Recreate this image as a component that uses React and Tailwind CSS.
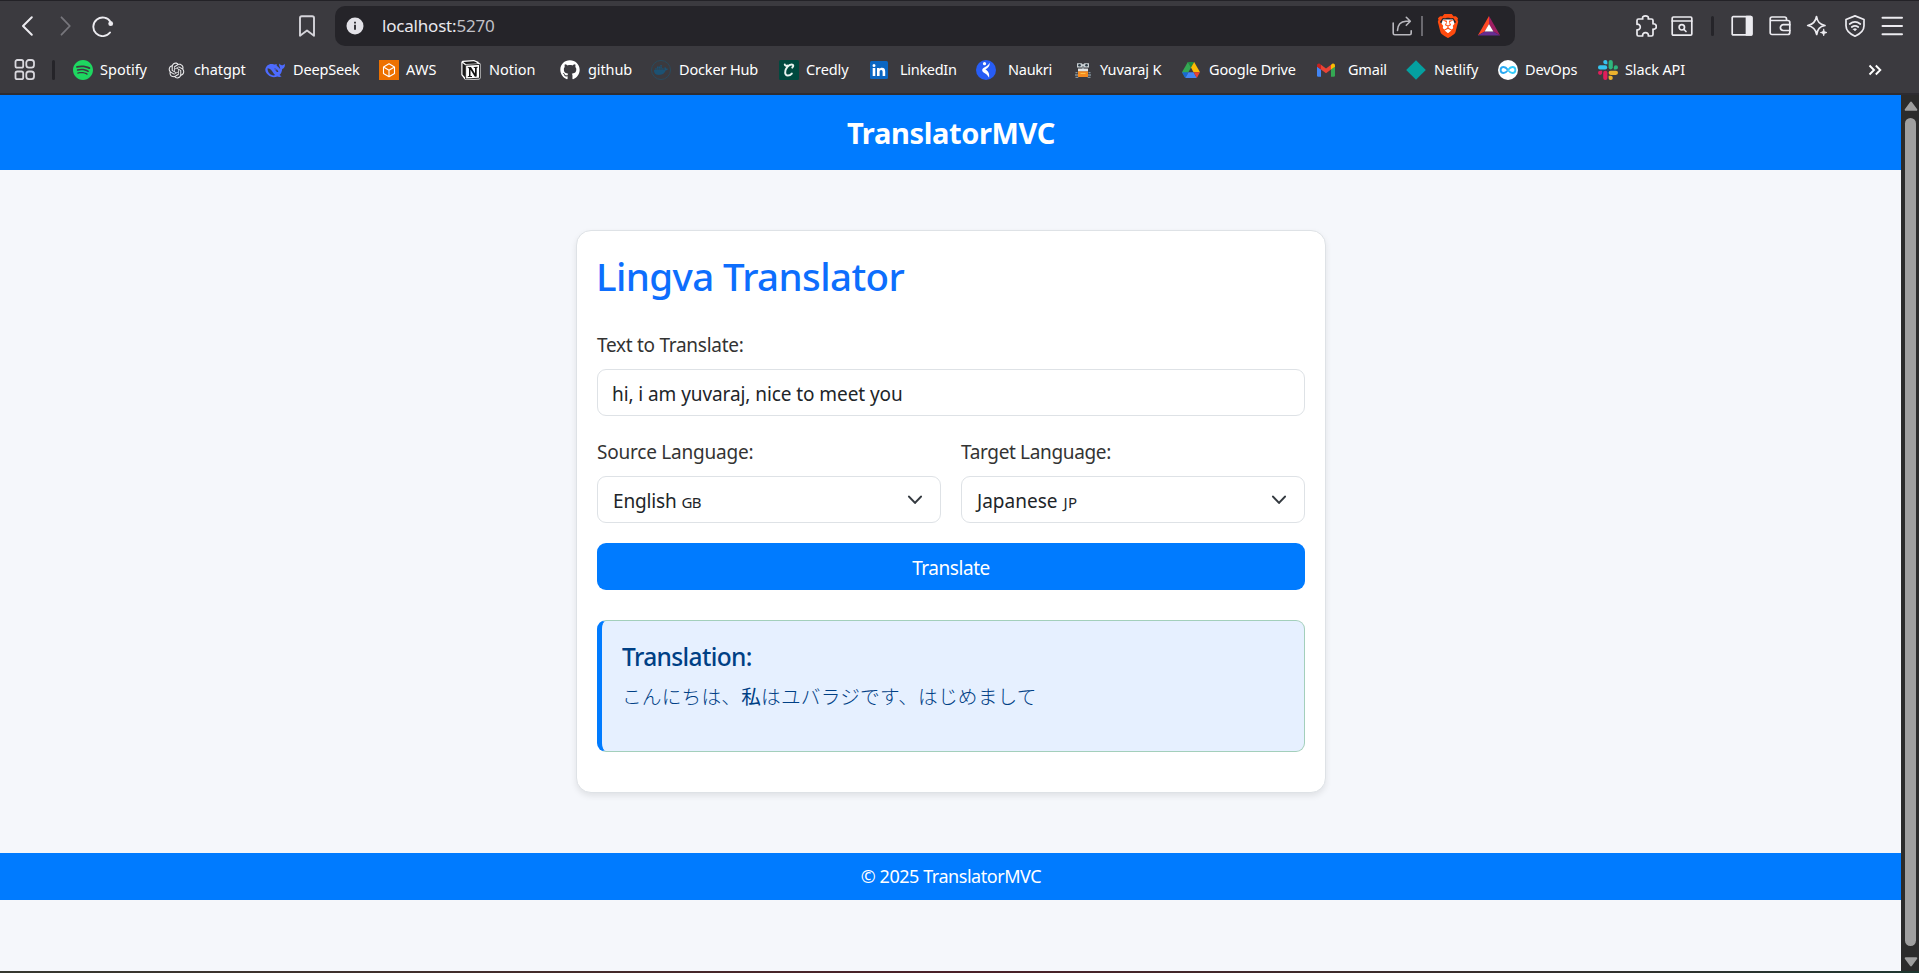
import { SiSpotify, SiBrave, SiDocker } from "react-icons/si";
import { RiOpenaiFill } from "react-icons/ri";
import { FaGithub } from "react-icons/fa";

function Stroke({ className, width = 1.7, children }) {
  return (
    <svg
      viewBox="0 0 22 22"
      className={`block h-[22px] w-[22px] shrink-0 ${className || ""}`}
      fill="none"
      stroke="currentColor"
      strokeWidth={width}
      strokeLinecap="round"
      strokeLinejoin="round"
    >
      {children}
    </svg>
  );
}

function Fill({ className, children }) {
  return (
    <svg viewBox="0 0 20 20" className={`block h-5 w-5 ${className || ""}`}>
      {children}
    </svg>
  );
}

const DeepSeekIcon = () => (
  <Fill>
    <path
      fill="#4d6bfe"
      d="M0.3 9.6C0.6 6.2 3.2 3.9 6.4 3.9c1.6 0 2.6.6 3.8.6.8 0 1-.5 1.6-.4-.5.9-.1 1.7.8 2.4 1 .8 1.9 1.6 2.5 2.6.2-1.100-.2-1.900-.7-2.900-.4-.9-.4-1.800.100-2.700.5 1 1.300 1.500 2.300 1.700 1.200.1 2.100-.5 3-1.500.5 2.700-.6 4.600-2.600 5.200-.2 2.600-1.200 4.600-2.700 6.100.8.600 1.500.9 2.100 1.300-1.400.900-3 .9-4.300.2-3 1.400-6.600.8-9-1.400C1.200 13.400.2 11.600.3 9.600Z"
    />
    <path
      fill="#3b3a3f"
      d="M2.600 8.200c2.800.1 4.400 2.300 5.600 4.600.5.9 1.100 1.600 2 2.100l-1.400.6C5.300 15.200 2.300 12.200 2.600 8.200ZM9.300 8.500c2.200 0 3.700 1.500 4.100 3.600-.8-.3-1.300-.2-2-.7C10.400 10.700 9.900 9.600 9.300 8.500Z"
    />
    <circle cx="10.900" cy="9.700" r="0.700" fill="#4d6bfe" />
  </Fill>
);

const AwsIcon = () => (
  <Fill>
    <path fill="#ed7100" d="M0 0h20v20H0z" />
    <path
      fill="none"
      stroke="#fff"
      strokeWidth="1.100"
      strokeLinejoin="round"
      d="M10 3.800 15.500 7v6.500L10 16.700 4.500 13.500V7ZM4.500 7 10 10.200 15.500 7M10 10.200v6.500"
    />
  </Fill>
);

const NotionIcon = () => (
  <Fill>
    <path fill="#fff" d="M1.500 0.700 13 0l3 1.200 3.500 2.600v14.400l-1.200 1.400L5 20 3.600 19.200.300 15V2Z" />
    <path fill="#1a1a1a" d="M2.200 1.900 12.800 1.200l2 .800 2 1.400-12 .7ZM1.500 3l2.500 2v12.300L1.500 14.400Z" />
    <path fill="none" stroke="#111" strokeWidth="0.900" d="M4.600 5.200 18.500 4.400v13.800L4.600 19Z" />
    <path fill="#111" d="M6.800 7.300 10 7.100l4 6.400V8l-1.300-.200v-.8l4-.2v.8l-1 .300v8.700l-1.800.100-4.400-7v6.200l1.500.200v.8l-4.200.2v-.8l1.200-.400V8.300L6.800 8.100Z" />
  </Fill>
);

const DockerIcon = () => (
  <span className="flex h-5 w-5 items-center justify-center rounded-full border border-[#294a5d]">
    <SiDocker className="h-[14px] w-[14px] text-[#1c5273]" />
  </span>
);

const CredlyIcon = () => (
  <Fill>
    <rect width="20" height="20" rx="1.500" fill="#00493f" />
    <path
      fill="none"
      stroke="#e8f4f0"
      strokeWidth="2"
      strokeLinecap="round"
      d="M13.300 7.600c1.500-1.400 1.200-3.200-.700-3.200-3 0-6.200 4-6.400 7.500-.2 2.300 1 3.700 2.700 3.700 1.600 0 2.900-.8 3.900-2M8.400 5.600C7 6 6 5.600 5.800 4.600"
    />
  </Fill>
);

const LinkedInIcon = () => (
  <Fill>
    <rect x="1" y="1" width="18" height="18" rx="1.500" fill="#0a66c2" />
    <path
      fill="#fff"
      d="M3.700 7.900h2.600V16H3.700ZM5 3.900a1.500 1.500 0 1 1 0 3 1.500 1.500 0 0 1 0-3ZM8 7.900h2.500V9c.5-.8 1.400-1.300 2.500-1.300 2.500 0 3.200 1.500 3.200 3.900V16h-2.600v-4c0-1.100-.2-2.100-1.400-2.100s-1.600.9-1.600 2V16H8Z"
    />
  </Fill>
);

const NaukriIcon = () => (
  <Fill>
    <circle cx="10" cy="10" r="10" fill="#275df5" />
    <circle cx="8.500" cy="3.700" r="1.600" fill="#fff" />
    <path fill="#fff" d="M13.700 2.800c.3 3.300-1.600 5.400-4.300 6.800 2.600 1.300 4.300 3.800 3.700 8.200-1.500-2.900-3.200-4-5.500-5.300-1.800-1.100-1.900-3.400-.2-4.400 2.300-1.300 5-2.600 6.300-5.300Z" />
  </Fill>
);

const RobotIcon = () => (
  <Fill>
    <path fill="#c9cfd3" d="M4 3.200h4.600L10 4.600l1.400-1.400H16v4.200h-4.800L10 6 8.800 7.400H4Z" />
    <circle cx="6.500" cy="5.300" r="1.300" fill="#2d3b45" />
    <circle cx="13.500" cy="5.300" r="1.300" fill="#2d3b45" />
    <path fill="#8d979e" d="M9.200 6.500h1.600V9H9.200Z" />
    <path fill="#dfe3e5" d="M5 8.600h10v3H5Z" />
    <path fill="#f58a1f" d="M5 11.300h10V17H5Z" />
    <path fill="#ffc247" d="M7.500 13h5v1h-5Z" />
    <path fill="#83919b" d="M2.500 12h2v1.300h-2ZM15.500 12h2v1.300h-2ZM2 14.300h3v1.400H2ZM15 14.300h3v1.400h-3ZM2.500 16.700h2.800V18H2.500ZM14.700 16.700h2.800V18h-2.800Z" />
  </Fill>
);

const DriveIcon = () => (
  <Fill>
    <path fill="#1e8e3e" d="M6.800 2h6.400L10 7.600Z" />
    <path fill="#34a853" d="M6.800 2 10 7.600 4.300 17.700 1 12.300Z" />
    <path fill="#fbbc04" d="M13.200 2 19 12.300h-6.500L10 7.600Z" />
    <path fill="#4285f4" d="M7.400 12.300h5.200l3.200 5.700H4.200Z" />
    <path fill="#ea4335" d="M12.600 12.300H19L15.800 18Z" />
    <path fill="#1967d2" d="M1 12.300h6.400L4.200 18Z" />
  </Fill>
);

const GmailIcon = () => (
  <Fill>
    <path fill="#4285f4" d="M1 6.500 5 9.500V16.800H2.300A1.300 1.300 0 0 1 1 15.500Z" />
    <path fill="#34a853" d="M15 9.500 19 6.500v9a1.300 1.300 0 0 1-1.300 1.300H15Z" />
    <path fill="#ea4335" d="M5 4.700 10 8.500l5-3.800v4.800l-5 3.800-5-3.800Z" />
    <path fill="#fbbc04" d="M15 4.700l1-.8c1.300-1 3-.1 3 1.500v1.300L15 9.600Z" />
    <path fill="#c5221f" d="M5 4.700 4 3.900C2.700 2.900 1 3.800 1 5.400v1.300l4 2.900Z" />
  </Fill>
);

const NetlifyIcon = () => (
  <Fill>
    <path fill="#05a0a0" d="M10 .2 19.800 10 10 19.800.2 10Z" />
  </Fill>
);

const DevOpsIcon = () => (
  <Fill>
    <circle cx="10" cy="10" r="10" fill="#fff" />
    <path
      fill="none"
      stroke="#2aa9f2"
      strokeWidth="1.900"
      d="M10 10C8.400 7.900 7.200 7 5.600 7a3 3 0 0 0 0 6C7.200 13 8.400 12.100 10 10"
    />
    <path
      fill="none"
      stroke="#35cdfb"
      strokeWidth="1.900"
      d="M10 10c1.600 2.100 2.800 3 4.400 3a3 3 0 0 0 0-6C12.800 7 11.600 7.900 10 10"
    />
  </Fill>
);

const SlackIcon = () => (
  <Fill>
    <g fill="#36c5f0">
      <rect x="0" y="5.300" width="9.200" height="4.200" rx="2.100" />
      <path d="M7.300 0a2.100 2.100 0 0 1 2.100 2.100v2.100H7.300a2.100 2.100 0 0 1 0-4.200Z" />
    </g>
    <g fill="#2eb67d">
      <rect x="10.600" y="0" width="4.200" height="9.400" rx="2.100" />
      <path d="M20 7.400a2.100 2.100 0 0 1-2.100 2.100h-2.100V7.400a2.100 2.100 0 0 1 4.200 0Z" />
    </g>
    <g fill="#ecb22e">
      <rect x="10.600" y="10.700" width="9.400" height="4.200" rx="2.100" />
      <path d="M12.700 20a2.100 2.100 0 0 1-2.100-2.100v-2.100h2.100a2.100 2.100 0 0 1 0 4.200Z" />
    </g>
    <g fill="#e01e5a">
      <rect x="5.200" y="10.700" width="4.200" height="9.300" rx="2.100" />
      <path d="M0 12.800a2.100 2.100 0 0 1 2.100-2.100h2.100v2.100a2.100 2.100 0 0 1-4.200 0Z" />
    </g>
  </Fill>
);

const SpotifyIcon = () => <SiSpotify className="h-5 w-5 text-[#1ed760]" />;
const ChatGptIcon = () => <RiOpenaiFill className="h-[19px] w-[19px] text-[#ececee]" />;
const GithubIcon = () => <FaGithub className="h-5 w-5 text-white" />;

const bookmarks = [
  { label: "Spotify", Icon: SpotifyIcon, box: "w-[93px]", text: "ml-[7px] tracking-normal" },
  { label: "chatgpt", Icon: ChatGptIcon, box: "w-[99px]", text: "ml-[8px] tracking-[-0.1px]" },
  { label: "DeepSeek", Icon: DeepSeekIcon, box: "w-[114px]", text: "ml-[8px] tracking-[-0.15px]" },
  { label: "AWS", Icon: AwsIcon, box: "w-[82px]", text: "ml-[7px] tracking-[0.2px]" },
  { label: "Notion", Icon: NotionIcon, box: "w-[99px]", text: "ml-[8px] tracking-normal" },
  { label: "github", Icon: GithubIcon, box: "w-[91px]", text: "ml-[8px] tracking-[-0.1px]" },
  { label: "Docker Hub", Icon: DockerIcon, box: "w-[128px]", text: "ml-[8px] tracking-[-0.15px]" },
  { label: "Credly", Icon: CredlyIcon, box: "w-[90px]", text: "ml-[7px] tracking-[-0.1px]" },
  { label: "LinkedIn", Icon: LinkedInIcon, box: "w-[107px]", text: "ml-[11px] tracking-[-0.3px]" },
  { label: "Naukri", Icon: NaukriIcon, box: "w-[97px]", text: "ml-[12px] tracking-[-0.25px]" },
  { label: "Yuvaraj K", Icon: RobotIcon, box: "w-[108px]", text: "ml-[7px] tracking-[-0.15px]" },
  { label: "Google Drive", Icon: DriveIcon, box: "w-[135px]", text: "ml-[8px] tracking-[-0.15px]" },
  { label: "Gmail", Icon: GmailIcon, box: "w-[90px]", text: "ml-[12px] tracking-[-0.2px]" },
  { label: "Netlify", Icon: NetlifyIcon, box: "w-[92px]", text: "ml-[8px] tracking-normal" },
  { label: "DevOps", Icon: DevOpsIcon, box: "w-[100px]", text: "ml-[7px] tracking-[-0.1px]" },
  { label: "Slack API", Icon: SlackIcon, box: "w-[100px]", text: "ml-[7px] tracking-[-0.15px]" },
];

function AddressBar() {
  return (
    <div className="ml-[17px] flex h-10 w-[1180px] shrink-0 items-center rounded-[10px] bg-[#252429] pl-[11px] pr-[14px]">
      <svg viewBox="0 0 18 18" className="block h-[18px] w-[18px]">
        <circle cx="9" cy="9" r="8.500" fill="#e3e2e8" />
        <path d="M8.100 7.800h1.800v5H8.100ZM8.100 4.700h1.800v1.700H8.100Z" fill="#252429" />
      </svg>
      <span className="ml-[18px] text-[17px] leading-6 tracking-[-0.2px] text-[#e9e8ee]">
        localhost:<span className="text-[#c2c1c7]">5270</span>
      </span>
      <div className="ml-auto flex items-center">
        <Stroke className="text-[#b9b8be]" width={1.6}>
          <path d="M2.200 8v10.200a1.500 1.500 0 0 0 1.500 1.500h15a1.500 1.500 0 0 0 1.500-1.500V15.700M6.500 15.500C6.700 10 10 6.600 15 6.300h4M15.300 2.300l4 4-4 4" />
        </Stroke>
        <span className="ml-2 h-5 w-[2px] bg-[#6a696f]" />
        <span className="relative ml-[13px] block h-6 w-6">
          <svg viewBox="0 0 24 24" className="absolute inset-0 h-6 w-6">
            <path d="M7 5.500h10l2 5-3 7-4 2.500-4-2.500-3-7Z" fill="#fff" />
          </svg>
          <SiBrave className="absolute inset-0 h-6 w-6 text-[#ff4b0f]" />
        </span>
        <svg viewBox="0 0 24 22" className="ml-[17px] block h-[22px] w-6">
          <path d="M12 1 .8 20.500 7.700 16.500 12 9Z" fill="#ff4724" />
          <path d="M12 1 23.200 20.500 16.300 16.500 12 9Z" fill="#9e1f63" />
          <path d="M.8 20.500h22.400l-6.900-4H7.700Z" fill="#662d91" />
          <path d="M12 9 16.400 16.600H7.600Z" fill="#fff" />
        </svg>
      </div>
    </div>
  );
}

function BrowserChrome() {
  return (
    <div className="flex h-[95px] shrink-0 flex-col border-b-2 border-t border-b-[#2d2c31] border-t-[#232227] bg-[#3b3a3f] text-[#ecebf0]">
      <div className="mt-[5px] flex h-10 items-center">
        <Stroke className="ml-[17px]" width={2}>
          <path d="M14.800 2.300 6 11l8.800 8.700" />
        </Stroke>
        <Stroke className="ml-[16px] text-[#77767c]" width={1.8}>
          <path d="M6.500 2.300 14.800 11l-8.300 8.700" />
        </Stroke>
        <Stroke className="ml-[15px]" width={1.9}>
          <path d="M18 17.500A9.300 9.300 0 1 1 18.600 7" />
          <circle cx="18.700" cy="8.700" r="2.400" fill="currentColor" stroke="none" />
        </Stroke>
        <Stroke className="ml-[182px] text-[#d5d4da]" width={1.9}>
          <path d="M4 20.700V3a1.800 1.800 0 0 1 1.800-1.800h10.400A1.800 1.800 0 0 1 18 3v17.700L11 15.500Z" />
        </Stroke>
        <AddressBar />
        <Stroke className="ml-[120px]">
          <path d="M2 5.500a1.500 1.500 0 0 1 1.500-1.500h4.300C7 2 8.500.9 10.500.9S13.900 2 13.200 4h3.300A1.500 1.500 0 0 1 18 5.500v3.300c2-.3 3.300.9 3.300 2.700S20 14.600 18 14.200v5.300a1.500 1.500 0 0 1-1.500 1.500h-3.200c.4-2-.8-3.300-2.800-3.300S7.300 19 7.700 21H3.500A1.500 1.500 0 0 1 2 19.500v-4.700c2 .3 3.300-1 3.300-2.800S4 8.900 2 9.300Z" />
        </Stroke>
        <Stroke className="ml-[14px]">
          <rect x="1.200" y="2" width="19.600" height="18.200" rx="1.200" />
          <path d="M1.200 6h19.600" />
          <circle cx="10.800" cy="12.300" r="2.700" />
          <path d="m13 14.500 2 2" />
        </Stroke>
        <span className="ml-[18px] h-5 w-[3px] rounded bg-[#252429]" />
        <Stroke className="ml-[17px]">
          <rect x="1.200" y="1.700" width="19.600" height="18.200" rx="1" />
          <path d="M15.500 1.700h4.300a1 1 0 0 1 1 1v16.200a1 1 0 0 1-1 1h-4.300Z" fill="currentColor" />
        </Stroke>
        <Stroke className="ml-[16px]">
          <path d="M2 5.500h16.800a2 2 0 0 1 2 2v10a2 2 0 0 1-2 2H3a1.800 1.800 0 0 1-1.800-1.800V3.900c0-1.100.9-1.900 1.800-1.900h12.500a2 2 0 0 1 2 2v1.500" />
          <path d="M20.800 9.700h-6.500a2.900 2.900 0 0 0 0 5.800h6.500" />
        </Stroke>
        <Stroke className="ml-[15px]">
          <path d="M10.500 1.500c.9 5.500 3 8 8.500 9-3 .6-4.800 1.500-6 3-1.200 1.400-1.800 3.200-2.300 6-1-5.500-3.400-8-9-9 5.600-1 7.900-3.500 8.800-9Z" />
          <path d="M17.700 14.300c.4 2.100 1.100 2.800 3.300 3.200-2.200.5-2.900 1.200-3.300 3.300-.4-2.100-1.100-2.800-3.300-3.300 2.200-.4 2.900-1.100 3.300-3.200Z" fill="currentColor" strokeWidth="0.800" />
        </Stroke>
        <Stroke className="ml-[16px]">
          <path d="M11 .9 20 4.500v6.300c0 4.700-3.500 8-9 10.400-5.500-2.400-9-5.700-9-10.400V4.500Z" />
          <path d="M5.700 9c3.200-2.500 7.400-2.500 10.600 0M7.800 12c2-1.500 4.400-1.500 6.400 0" />
          <path d="m9.300 14.200 1.700 1.700 1.700-1.700a3 3 0 0 0-3.400 0Z" fill="currentColor" strokeWidth="0.500" />
        </Stroke>
        <Stroke className="ml-[15px]" width={2}>
          <path d="M1.500 2.800h19.500M1.500 11h19.500M1.500 19.300h19.500" />
        </Stroke>
      </div>
      <div className="mt-[9px] flex h-[30px] items-center text-[14.5px] leading-5 text-white">
        <svg viewBox="0 0 22 22" className="ml-[14px] block h-[22px] w-[22px] text-[#d9d8de]" fill="none" stroke="currentColor" strokeWidth="1.800">
          <rect x="1.500" y="1" width="7.700" height="7.700" rx="1.800" />
          <rect x="12.300" y="1" width="7.700" height="7.700" rx="2.600" />
          <rect x="1.500" y="12.500" width="7.700" height="7.700" rx="1.800" />
          <rect x="12.300" y="12.500" width="7.700" height="7.700" rx="2.600" />
        </svg>
        <span className="ml-4 mr-[18px] h-5 w-[3px] rounded bg-[#252429]" />
        {bookmarks.map(({ label, Icon, box, text }) => (
          <div key={label} className={`flex shrink-0 items-center whitespace-nowrap ${box}`}>
            <span className="flex h-5 w-5 shrink-0 items-center justify-center">
              <Icon />
            </span>
            <span className={`pb-[2px] ${text}`}>{label}</span>
          </div>
        ))}
        <svg viewBox="0 0 14 12" className="ml-[170px] block h-3 w-[14px]" fill="none" stroke="currentColor" strokeWidth="1.900">
          <path d="M1.500 1.500 6 6l-4.500 4.500M7.800 1.500 12.300 6l-4.500 4.500" />
        </svg>
      </div>
    </div>
  );
}

function LanguageSelect({ label, value, code, labelClass, valueClass, codeClass }) {
  return (
    <div className="flex-1">
      <div className={`leading-[30px] text-[#333] ${labelClass}`}>{label}</div>
      <div className="mt-[9px] flex h-[47px] items-center rounded-[9px] border border-[#dee2e6] pl-[15px] pr-[15px] text-[#212529]">
        <span className={`pt-[4px] ${valueClass}`}>
          {value} <span className={`text-[15px] ${codeClass}`}>{code}</span>
        </span>
        <svg viewBox="0 0 16 16" className="ml-auto block h-5 w-5" fill="none" stroke="#343a40" strokeWidth="1.700" strokeLinecap="round" strokeLinejoin="round">
          <path d="m3.200 5.300 4.800 5 4.800-5" />
        </svg>
      </div>
    </div>
  );
}

function TranslatorCard() {
  return (
    <div className="h-[563px] w-[750px] rounded-[15px] border border-[#dee2e6] bg-white px-5 pt-[21px] text-[19px] shadow-[0_3px_6px_rgba(0,0,0,0.085)]">
      <h1 className="text-[38.5px] font-medium leading-[48px] tracking-[-0.6px] text-[#0d6efd] -ml-px">
        Lingva Translator
      </h1>
      <div className="mt-[30px] leading-[30px] tracking-[-0.28px] text-[#333]">Text to Translate:</div>
      <div className="mt-[9px] flex h-[47px] items-center rounded-[9px] border border-[#dee2e6] pl-[14px] pt-[4px] tracking-[-0.08px] text-[#212529]">
        hi, i am yuvaraj, nice to meet you
      </div>
      <div className="mt-[21px] flex gap-5">
        <LanguageSelect
          label="Source Language:"
          value="English"
          code="GB"
          labelClass="tracking-[-0.22px]"
          valueClass="tracking-[-0.15px]"
          codeClass="tracking-[-0.5px]"
        />
        <LanguageSelect
          label="Target Language:"
          value="Japanese"
          code="JP"
          labelClass="tracking-[-0.35px]"
          valueClass="tracking-normal"
          codeClass="ml-px tracking-[0.6px]"
        />
      </div>
      <button className="mt-5 flex h-[47px] w-full items-center justify-center rounded-[9px] bg-[#007bff] pt-[3px] tracking-[-0.45px] text-white">
        Translate
      </button>
      <div className="mt-[30px] h-[132px] rounded-[9px] border border-l-[5px] border-[#a3cfbb] border-l-[#007bff] bg-[#e6f0ff] pl-5 pt-[21px] text-[#004085]">
        <h2 className="text-[24.5px] font-medium leading-[30px] tracking-[-0.62px]">Translation:</h2>
        <p
          lang="ja"
          className="mt-[7px] font-['Noto_Sans_CJK_JP',sans-serif] text-[19.7px] font-light leading-[34px] tracking-[0.18px]"
        >
          こんにちは、<span className="font-normal">私</span>はユバラジです、はじめまして
        </p>
      </div>
    </div>
  );
}

function Scrollbar() {
  return (
    <div className="flex w-[18px] shrink-0 flex-col items-center bg-[#2b2b2b] pt-[6px]">
      <svg viewBox="0 0 14 10" className="ml-px block h-[10px] w-[14px]" fill="#9f9f9f">
        <path d="M6 1.200a1.200 1.200 0 0 1 2 0l5 6.800a1 1 0 0 1-.8 1.700H1.800A1 1 0 0 1 1 8Z" />
      </svg>
      <div className="ml-px mt-[7px] h-[828px] w-[11px] rounded-full bg-[#9f9f9f]" />
      <svg viewBox="0 0 14 10" className="ml-px mt-[11px] block h-[10px] w-[14px] rotate-180" fill="#9f9f9f">
        <path d="M6 1.200a1.200 1.200 0 0 1 2 0l5 6.800a1 1 0 0 1-.8 1.700H1.800A1 1 0 0 1 1 8Z" />
      </svg>
    </div>
  );
}

export default function App() {
  return (
    <div className="flex h-[973px] w-[1919px] flex-col overflow-hidden font-['Noto_Sans','Open_Sans',sans-serif]">
      <BrowserChrome />
      <div className="flex h-[876px]">
        <div className="flex w-[1901px] flex-col bg-[#f5f7fb]">
          <header className="flex h-[75px] items-center justify-center bg-[#007bff] pl-px text-[29px] font-bold tracking-[-0.35px] text-white">
            TranslatorMVC
          </header>
          <main className="flex h-[683px] items-start justify-center pl-px pt-[60px]">
            <TranslatorCard />
          </main>
          <footer className="flex h-[47px] items-center justify-center bg-[#007bff] pl-px text-[18px] tracking-[-0.45px] text-white">
            © 2025 TranslatorMVC
          </footer>
        </div>
        <Scrollbar />
      </div>
      <div className="h-[2px] bg-linear-to-r from-[#35382f] via-[#4a1f27] to-[#1d362f]" />
    </div>
  );
}
